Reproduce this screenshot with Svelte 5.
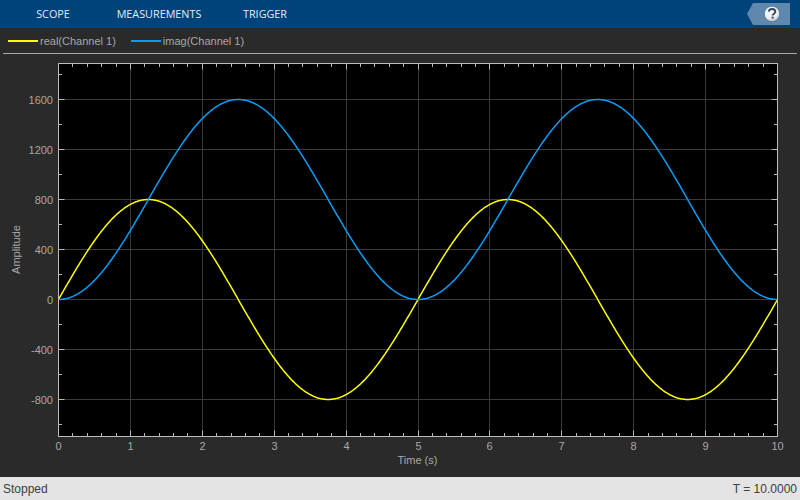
<script>
  const X0 = 58.5, PX = 71.9, Y0 = 299.5, PY = 0.125;
  const L = 58.5, R = 777.5, T = 63.5, B = 436.5;
  const sx = (t) => X0 + t * PX;
  const sy = (v) => Y0 - v * PY;
  const snap = (t) => Math.floor(sx(t)) + 0.5;
  const curve = (fn) => {
    const pts = [];
    for (let i = 0; i <= 1000; i++) {
      const t = i / 100;
      pts.push(sx(t).toFixed(2) + ',' + sy(fn(t)).toFixed(2));
    }
    return pts.join(' ');
  };
  const w = (2 * Math.PI) / 5;
  const real = curve((t) => 800 * Math.sin(w * t));
  const imag = curve((t) => 800 * (1 - Math.cos(w * t)));
  const xMajor = [0, 1, 2, 3, 4, 5, 6, 7, 8, 9, 10];
  const yMajor = [1600, 1200, 800, 400, 0, -400, -800];
  const xMinor = [];
  for (let i = 1; i < 50; i++) if (i % 5) xMinor.push(i / 5);
  const yMinor = [1800, 1400, 1000, 600, 200, -200, -600, -1000];
  const menus = ['SCOPE', 'MEASUREMENTS', 'TRIGGER'];
</script>

<div class="app">
  <header class="toolbar">
    <nav class="tabs">
      {#each menus as m}<span class="tab">{m}</span>{/each}
    </nav>
    <svg class="help" width="44" height="24" viewBox="0 0 44 24" aria-label="Help">
      <defs>
        <radialGradient id="ball" cx="0.42" cy="0.3" r="0.8">
          <stop offset="0" stop-color="#ffffff" />
          <stop offset="0.6" stop-color="#eceff2" />
          <stop offset="1" stop-color="#9aa6b2" />
        </radialGradient>
      </defs>
      <polygon points="1,12 7,1 44,1 44,23 7,23" fill="#5e88ad" />
      <circle cx="26" cy="12" r="7.7" fill="url(#ball)" stroke="#33506c" stroke-width="0.5" />
      <path d="M22.8 9.6c.2-1.7 1.5-2.6 3.3-2.6 1.9 0 3.2 1 3.2 2.6 0 1.2-.7 1.8-1.6 2.4-.8.5-1 .8-1 1.6" fill="none" stroke="#34495f" stroke-width="1.9" />
      <rect x="25.6" y="14.6" width="2" height="2" fill="#34495f" />
    </svg>
  </header>

  <div class="legend">
    <span class="entry"><i class="swatch yellow"></i>real(Channel 1)</span>
    <span class="entry"><i class="swatch blue"></i>imag(Channel 1)</span>
  </div>
  <div class="divider"></div>

  <main class="plot">
    <svg width="800" height="421" viewBox="0 55 800 421">
      <rect x={L} y={T} width={R - L} height={B - T} fill="#000" />
      <g stroke="#3a3a3a" stroke-width="1">
        {#each xMajor.slice(1, -1) as t}<line x1={snap(t)} x2={snap(t)} y1={T} y2={B} />{/each}
        {#each yMajor as v}<line x1={L} x2={R} y1={sy(v)} y2={sy(v)} />{/each}
      </g>
      <g stroke="#b8b8b8" stroke-width="1">
        {#each xMinor as t}
          <line x1={snap(t)} x2={snap(t)} y1={T} y2={T + 3.5} />
          <line x1={snap(t)} x2={snap(t)} y1={B - 3.5} y2={B} />
        {/each}
        {#each xMajor as t}
          <line x1={snap(t)} x2={snap(t)} y1={T} y2={T + 6} />
          <line x1={snap(t)} x2={snap(t)} y1={B - 6} y2={B} />
        {/each}
        {#each yMinor as v}
          <line x1={L} x2={L + 3.5} y1={sy(v)} y2={sy(v)} />
          <line x1={R - 3.5} x2={R} y1={sy(v)} y2={sy(v)} />
        {/each}
        {#each yMajor as v}
          <line x1={L} x2={L + 6} y1={sy(v)} y2={sy(v)} />
          <line x1={R - 6} x2={R} y1={sy(v)} y2={sy(v)} />
        {/each}
      </g>
      <polyline points={real} class="line" stroke="#ffff00" />
      <polyline points={imag} class="line" stroke="#0a9cf5" />
      <rect x={L} y={T} width={R - L} height={B - T} fill="none" stroke="#bcbcbc" />
      <g class="ticklabel" text-anchor="end">
        {#each yMajor as v}<text x="53" y={sy(v) + 4}>{v}</text>{/each}
      </g>
      <g class="ticklabel" text-anchor="middle">
        {#each xMajor as t}<text x={snap(t)} y="450">{t}</text>{/each}
        <text x="417.5" y="464">Time (s)</text>
      </g>
      <text class="ticklabel" text-anchor="middle" transform="translate(20 249.5) rotate(-90)">Amplitude</text>
    </svg>
  </main>

  <footer class="status">
    <span>Stopped</span>
    <span>T = 10.0000</span>
  </footer>
</div>

<style>
  :global(body) { margin: 0; }
  .app {
    width: 800px;
    height: 500px;
    display: flex;
    flex-direction: column;
    background: #2a2a2a;
    overflow: hidden;
    font-family: "Liberation Sans", Arial, sans-serif;
  }
  .toolbar {
    height: 28px;
    flex: none;
    display: flex;
    align-items: center;
    justify-content: space-between;
    background: #00427a;
    padding-right: 10px;
    box-sizing: border-box;
  }
  .tabs { display: grid; grid-template-columns: repeat(3, 106px); }
  .tab {
    color: #e2ecf4;
    font-family: "Open Sans", sans-serif;
    font-size: 10.8px;
    line-height: 28px;
    text-align: center;
  }
  .help { display: block; }
  .legend {
    height: 25px;
    flex: none;
    display: flex;
    align-items: center;
    gap: 15px;
    padding-left: 8px;
    color: #a8a8a8;
    font-size: 11px;
  }
  .entry { display: flex; align-items: center; gap: 2px; }
  .swatch { display: block; width: 30px; height: 2px; }
  .yellow { background: #ffff00; }
  .blue { background: #0a9cf5; }
  .divider { height: 1px; margin: 0 3px; background: #a8a8a8; flex: none; }
  .plot { flex: 1; min-height: 0; margin-top: 1px; }
  .plot svg { display: block; }
  .line { fill: none; stroke-width: 1.5; }
  .ticklabel { fill: #a8a8a8; font-size: 11px; }
  .status {
    height: 23px;
    flex: none;
    display: flex;
    align-items: center;
    justify-content: space-between;
    padding: 0 3px;
    background: #e4e4e4;
    color: #404040;
    font-size: 12px;
  }
</style>
